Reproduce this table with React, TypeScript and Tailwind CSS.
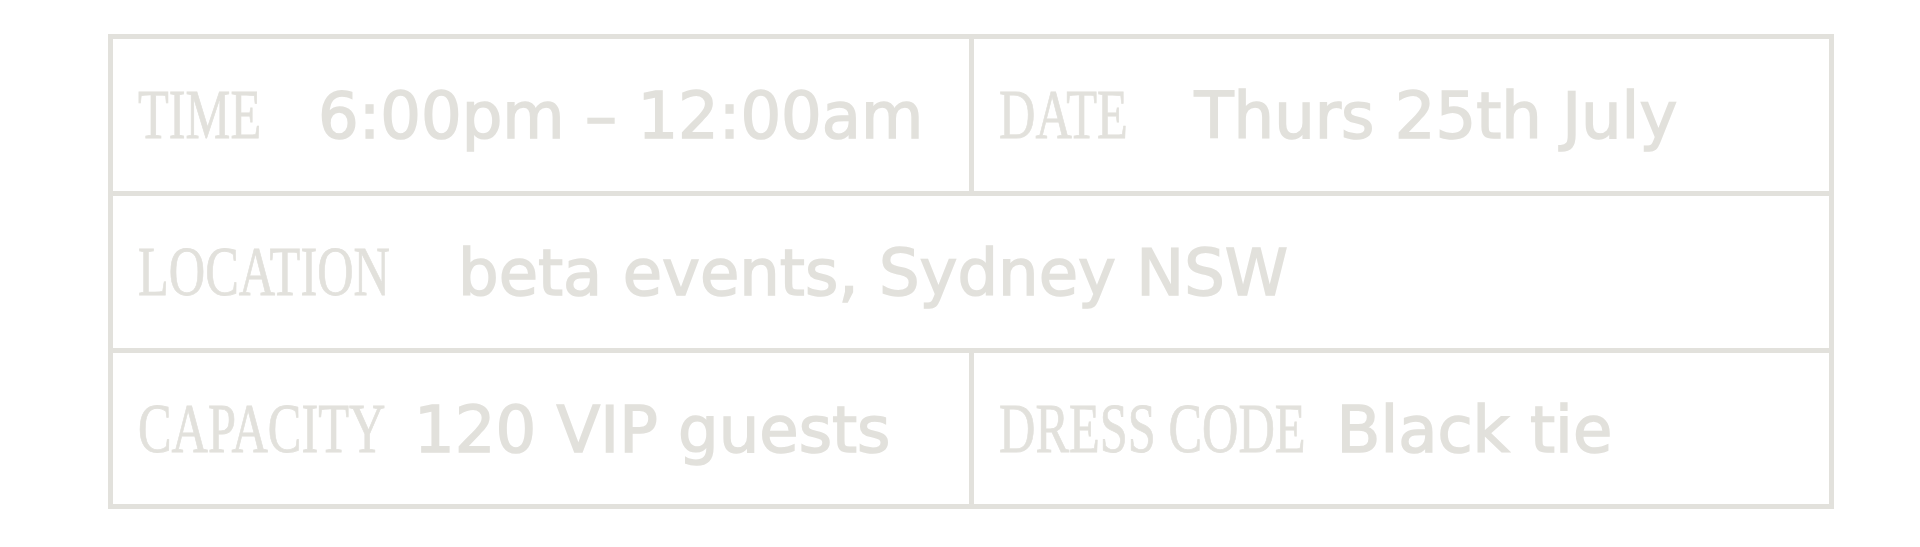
const DETAILS = [
  [
    { label: "TIME", value: "6:00pm – 12:00am", slot: "w-[180px]", labelWidth: "w-[125px]" },
    { label: "DATE", value: "Thurs 25th July", slot: "w-[196px]", labelWidth: "w-[133px]" },
  ],
  [{ label: "LOCATION", value: "beta events, Sydney NSW", slot: "w-[320px]", labelWidth: "w-[262px]" }],
  [
    { label: "CAPACITY", value: "120 VIP guests", slot: "w-[276px]", labelWidth: "w-[251px]" },
    { label: "DRESS CODE", value: "Black tie", slot: "w-[338px]", labelWidth: "w-[302px]" },
  ],
];

type Detail = { label: string; value: string; slot: string; labelWidth: string };

function DetailCell({ item, wide }: { item: Detail; wide?: boolean }) {
  return (
    <div
      className={`flex items-center bg-white pl-[25px] ${wide ? "col-span-2" : ""}`}
    >
      <div className="flex items-baseline leading-none text-[#e2e1dc]">
        <span className={`shrink-0 ${item.slot}`}>
          <span className={`inline-block ${item.labelWidth}`}>
            <span className="inline-block origin-left scale-x-[0.72] whitespace-nowrap font-['Liberation_Serif',serif] text-[70px] leading-none [-webkit-text-stroke:0.8px_#e2e1dc]">
              {item.label}
            </span>
          </span>
        </span>
        <span className="whitespace-nowrap font-['DejaVu_Sans',sans-serif] text-[64px] leading-none [-webkit-text-stroke:1.5px_#e2e1dc]">
          {item.value}
        </span>
      </div>
    </div>
  );
}

export default function App() {
  return (
    <div className="min-h-[547px] bg-white pt-[34px] pl-[108px]">
      <div className="grid w-[1726px] grid-cols-2 grid-rows-[152px_152px_151px] gap-[5px] bg-[#e2e1dc] p-[5px]">
        {DETAILS.map((row) =>
          row.map((item) => (
            <DetailCell key={item.label} item={item} wide={row.length === 1} />
          )),
        )}
      </div>
    </div>
  );
}
